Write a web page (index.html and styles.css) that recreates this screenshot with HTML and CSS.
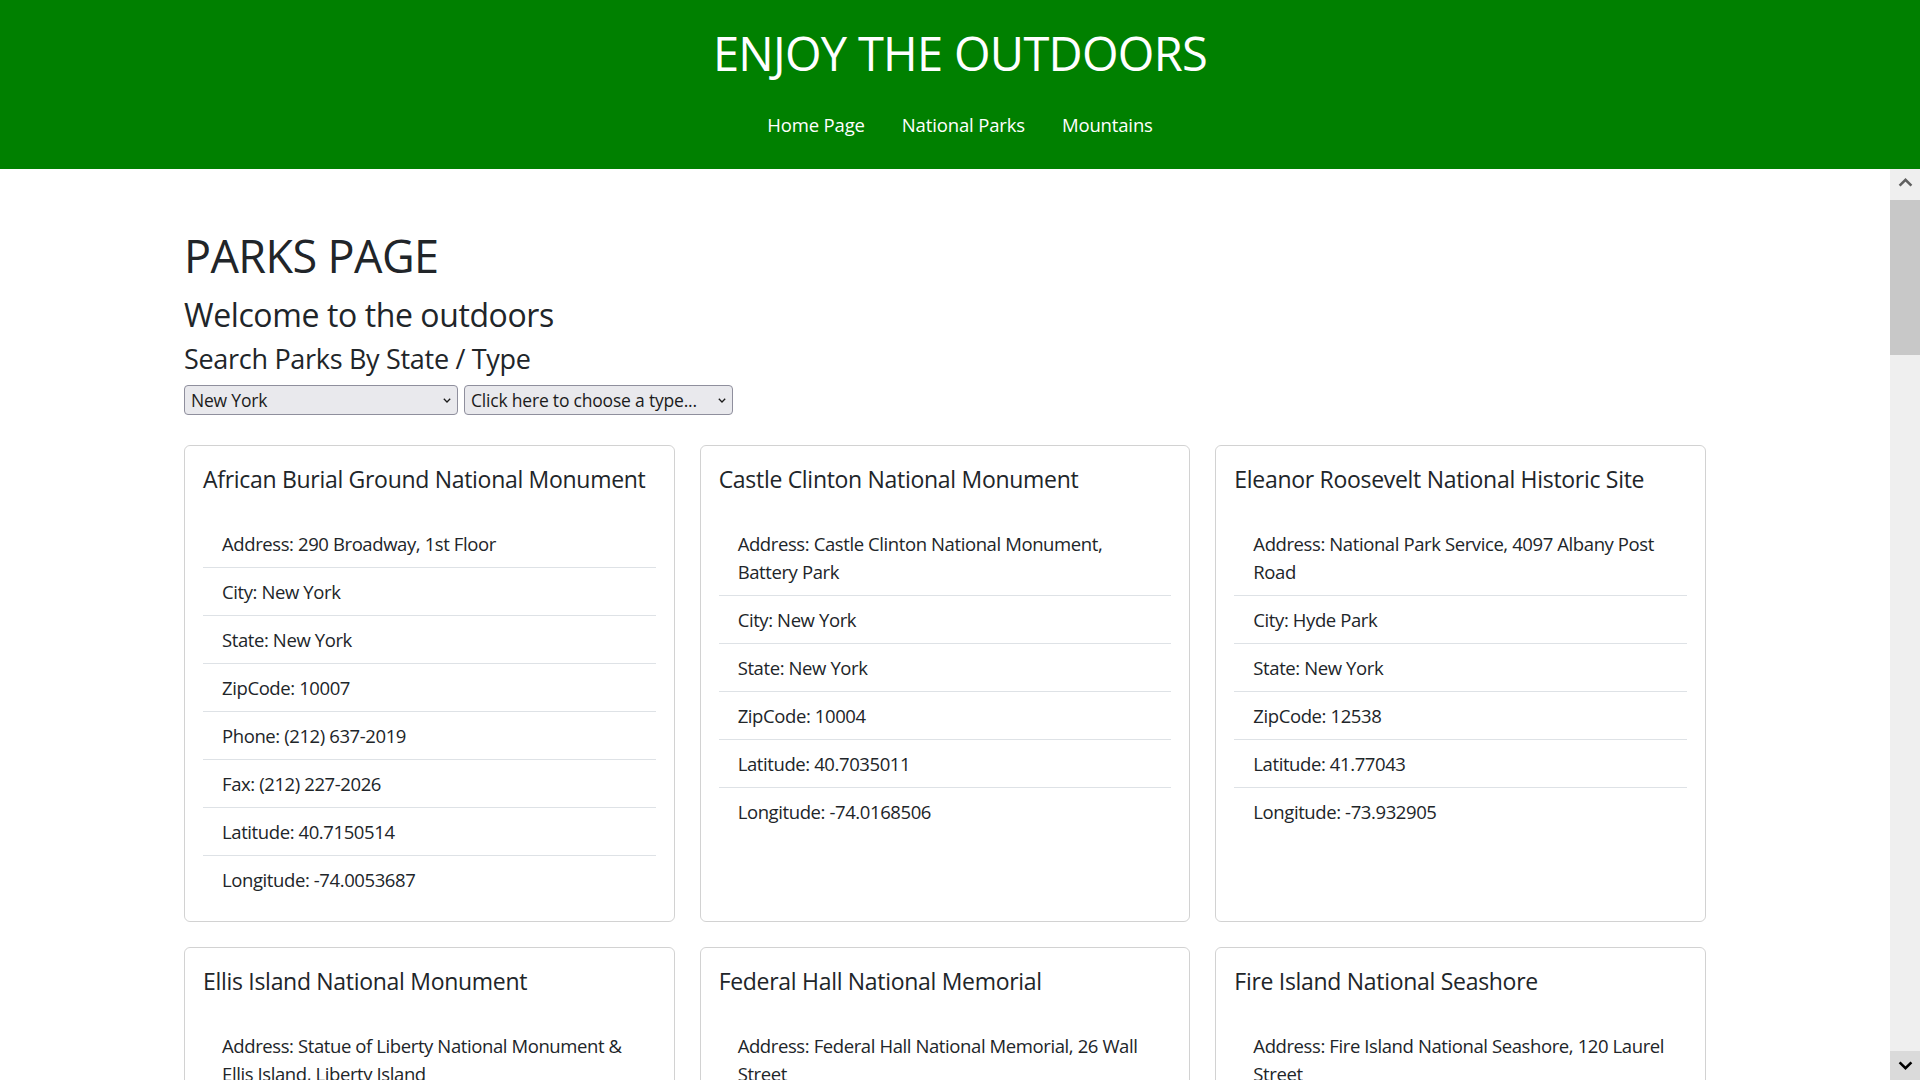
FILE: index.html
```html
<!DOCTYPE html>
<html lang="en">
<head>
<meta charset="utf-8">
<title>Parks Page</title>
<link rel="stylesheet" href="styles.css">
</head>
<body>
<header class="site-header">
  <h1 class="site-title">ENJOY THE OUTDOORS</h1>
  <nav class="site-nav">
    <a href="#">Home Page</a>
    <a href="#">National Parks</a>
    <a href="#">Mountains</a>
  </nav>
</header>
<div class="viewport">
<main class="page">
  <div class="container">
    <h1 class="page-title">PARKS PAGE</h1>
    <h2 class="page-subtitle">Welcome to the outdoors</h2>
    <h4 class="search-title">Search Parks By State / Type</h4>
    <div class="filters">
      <span class="select-wrap">
        <select class="select select-state">
          <option>New York</option>
        </select>
        <svg class="chev" viewBox="0 0 8 5"><path d="M0.8 0.8 L4 4 L7.2 0.8" fill="none" stroke="#1b1b1b" stroke-width="1.3"/></svg>
      </span>
      <span class="select-wrap">
        <select class="select select-type">
          <option>Click here to choose a type...</option>
        </select>
        <svg class="chev" viewBox="0 0 8 5"><path d="M0.8 0.8 L4 4 L7.2 0.8" fill="none" stroke="#1b1b1b" stroke-width="1.3"/></svg>
      </span>
    </div>

    <div class="cards">
      <div class="card"><h5 class="card-title">African Burial Ground National Monument</h5><ul class="card-list">
        <li>Address: 290 Broadway, 1st Floor</li><li>City: New York</li><li>State: New York</li><li>ZipCode: 10007</li><li>Phone: (212) 637-2019</li><li>Fax: (212) 227-2026</li><li>Latitude: 40.7150514</li><li>Longitude: -74.0053687</li></ul></div>
      <div class="card"><h5 class="card-title">Castle Clinton National Monument</h5><ul class="card-list">
        <li>Address: Castle Clinton National Monument, Battery Park</li><li>City: New York</li><li>State: New York</li><li>ZipCode: 10004</li><li>Latitude: 40.7035011</li><li>Longitude: -74.0168506</li></ul></div>
      <div class="card"><h5 class="card-title">Eleanor Roosevelt National Historic Site</h5><ul class="card-list">
        <li>Address: National Park Service, 4097 Albany Post Road</li><li>City: Hyde Park</li><li>State: New York</li><li>ZipCode: 12538</li><li>Latitude: 41.77043</li><li>Longitude: -73.932905</li></ul></div>

      <div class="card"><h5 class="card-title">Ellis Island National Monument</h5><ul class="card-list">
        <li>Address: Statue of Liberty National Monument &amp; Ellis Island, Liberty Island</li><li>City: New York</li><li>State: New York</li><li>ZipCode: 10004</li><li>Phone: (212) 363-3200</li><li>Latitude: 40.6994</li><li>Longitude: -74.0395</li></ul></div>
      <div class="card"><h5 class="card-title">Federal Hall National Memorial</h5><ul class="card-list">
        <li>Address: Federal Hall National Memorial, 26 Wall Street</li><li>City: New York</li><li>State: New York</li><li>ZipCode: 10005</li><li>Phone: (212) 825-6990</li><li>Fax: (212) 825-6874</li><li>Latitude: 40.7073</li><li>Longitude: -74.0103</li></ul></div>
      <div class="card"><h5 class="card-title">Fire Island National Seashore</h5><ul class="card-list">
        <li>Address: Fire Island National Seashore, 120 Laurel Street</li><li>City: Patchogue</li><li>State: New York</li><li>ZipCode: 11772</li><li>Phone: (631) 687-4750</li><li>Fax: (631) 289-4898</li><li>Latitude: 40.6497</li><li>Longitude: -73.0942</li></ul></div>

      <div class="card"><h5 class="card-title">Fort Stanwix National Monument</h5><ul class="card-list">
        <li>Address: 100 North James Street</li><li>City: Rome</li><li>State: New York</li><li>ZipCode: 13440</li><li>Phone: (315) 338-7730</li><li>Fax: (315) 334-5051</li><li>Latitude: 43.2108</li><li>Longitude: -75.4557</li></ul></div>
      <div class="card"><h5 class="card-title">Gateway National Recreation Area</h5><ul class="card-list">
        <li>Address: 210 New York Avenue</li><li>City: Staten Island</li><li>State: New York</li><li>ZipCode: 10305</li><li>Phone: (718) 354-4606</li><li>Latitude: 40.6001</li><li>Longitude: -73.9011</li></ul></div>
      <div class="card"><h5 class="card-title">General Grant National Memorial</h5><ul class="card-list">
        <li>Address: 122nd Street &amp; Riverside Drive</li><li>City: New York</li><li>State: New York</li><li>ZipCode: 10027</li><li>Phone: (212) 666-1640</li><li>Latitude: 40.8134</li><li>Longitude: -73.9631</li></ul></div>
    </div>
  </div>
</main>
<div class="scrollbar" aria-hidden="true">
  <div class="sb-btn sb-up">
    <svg class="sb-arrow" viewBox="0 0 15 9"><path d="M1.6 7.6 L7.5 1.9 L13.4 7.6" fill="none" stroke="#606060" stroke-width="2.6"/></svg>
  </div>
  <div class="sb-track"><div class="sb-thumb"></div></div>
  <div class="sb-btn sb-down">
    <svg class="sb-arrow" viewBox="0 0 15 9"><path d="M1.6 1.4 L7.5 7.1 L13.4 1.4" fill="none" stroke="#000" stroke-width="2.6"/></svg>
  </div>
</div>
</div>
</body>
</html>
```
FILE: styles.css
```css
* { box-sizing: border-box; }
html, body { margin: 0; height: 100%; }
body {
  font-family: "Open Sans", "Noto Sans", sans-serif;
  color: #212529;
  background: #fff;
  display: flex;
  flex-direction: column;
  overflow: hidden;
}
.site-header {
  flex: none;
  background: #008000;
  color: #fff;
  text-align: center;
  padding: 25px 0 30px;
}
.site-title {
  margin: 0 0 30px;
  font-size: 47px;
  line-height: 56px;
  font-weight: 400;
  letter-spacing: -0.7px;
}
.site-nav {
  display: flex;
  justify-content: center;
  gap: 37px;
}
.site-nav a {
  color: #fff;
  text-decoration: none;
  font-size: 18.5px;
  line-height: 28px;
  letter-spacing: -0.15px;
}
.viewport {
  flex: 1;
  min-height: 0;
  display: flex;
}
.page {
  flex: 1;
  min-width: 0;
  overflow: hidden;
}
.scrollbar {
  flex: none;
  width: 30px;
  display: flex;
  flex-direction: column;
  background: #efefef;
}
.sb-btn {
  flex: none;
  display: flex;
  align-items: center;
  justify-content: center;
}
.sb-up { height: 27px; background: #efefef; }
.sb-down { height: 29px; background: #dadada; }
.sb-arrow { width: 15px; height: 9px; }
.sb-track {
  flex: 1;
  padding-top: 4px;
}
.sb-thumb {
  height: 155px;
  background: #c8c8c8;
}
.container {
  width: 1522px;
  margin: 0 auto;
  padding: 59px 0 200px;
}
.page-title {
  margin: 0;
  font-size: 45px;
  line-height: 56px;
  font-weight: 400;
  letter-spacing: -0.6px;
}
.page-subtitle {
  margin: 14px 0 0;
  font-size: 32px;
  line-height: 34px;
  font-weight: 400;
  letter-spacing: -0.4px;
}
.search-title {
  margin: 12px 0 0;
  font-size: 27px;
  line-height: 30px;
  font-weight: 400;
  letter-spacing: -0.3px;
}
.filters {
  display: flex;
  gap: 6px;
  margin-top: 11px;
}
.select-wrap { position: relative; display: block; }
.select {
  appearance: none;
  -webkit-appearance: none;
  display: block;
  height: 30px;
  margin: 0;
  padding: 0 20px 0 6px;
  font-family: "Open Sans", "Noto Sans", sans-serif;
  font-size: 17.5px;
  letter-spacing: -0.2px;
  color: #1b1b1b;
  background: #e9e9ed;
  border: 1px solid #8f8f9d;
  border-radius: 4px;
}
.select-state { width: 274px; }
.select-type { width: 269px; }
.chev {
  position: absolute;
  right: 7px;
  top: 13px;
  width: 8px;
  height: 5px;
  pointer-events: none;
}
.cards {
  display: grid;
  grid-template-columns: repeat(3, 1fr);
  gap: 25px;
  margin-top: 30px;
}
.card {
  border: 1px solid rgba(0, 0, 0, 0.175);
  border-radius: 6px;
  padding: 19.4px 18px 17.4px;
}
.card-title {
  margin: 0 0 27px;
  font-size: 23px;
  line-height: 28px;
  font-weight: 400;
  letter-spacing: -0.3px;
}
.card-list {
  list-style: none;
  margin: 0;
  padding: 0;
}
.card-list li {
  padding: 10px 19px 9px;
  font-size: 18.5px;
  line-height: 28px;
  letter-spacing: -0.4px;
  border-bottom: 1px solid #dee2e6;
}
.card-list li:last-child { border-bottom: 0; }
```
